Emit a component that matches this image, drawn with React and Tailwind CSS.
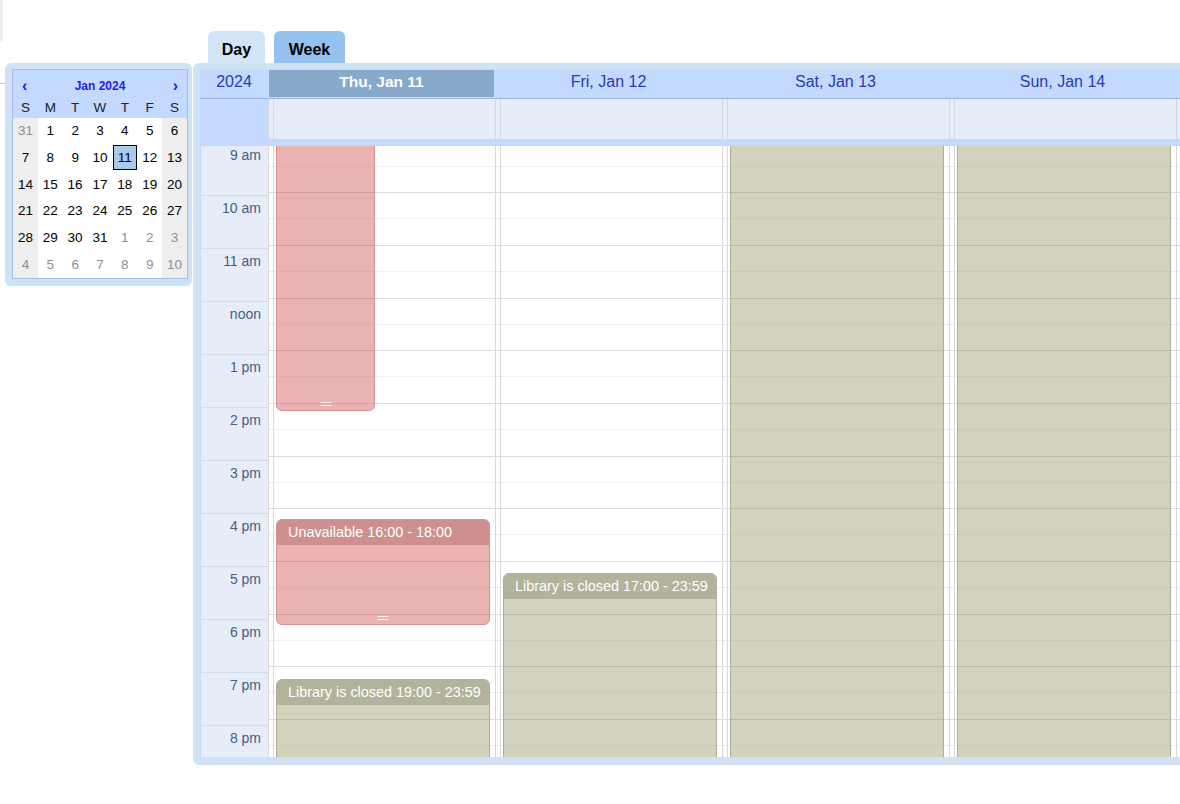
import React from 'react';

const FONT = "font-['Liberation_Sans',Arial,sans-serif]";

const weeks = [
  [31, 1, 2, 3, 4, 5, 6],
  [7, 8, 9, 10, 11, 12, 13],
  [14, 15, 16, 17, 18, 19, 20],
  [21, 22, 23, 24, 25, 26, 27],
  [28, 29, 30, 31, 1, 2, 3],
  [4, 5, 6, 7, 8, 9, 10],
];

// which cells belong to another month
const isOther = (w, d) => (w === 0 && d === 0) || (w === 4 && d >= 4) || w === 5;

const hourLabels = ['9 am', '10 am', '11 am', 'noon', '1 pm', '2 pm', '3 pm', '4 pm', '5 pm', '6 pm', '7 pm', '8 pm'];

const days = [
  {
    key: 'thu',
    label: 'Thu, Jan 11',
    today: true,
    events: [
      { kind: 'busy', pos: 'top-[-10px] h-[275px] w-[99px]', handle: true },
      { kind: 'busy', pos: 'top-[373px] h-[106px] w-[214px]', title: 'Unavailable 16:00 - 18:00', handle: true },
      { kind: 'closed', pos: 'top-[533px] h-[200px] w-[214px]', title: 'Library is closed 19:00 - 23:59' },
    ],
  },
  {
    key: 'fri',
    label: 'Fri, Jan 12',
    events: [{ kind: 'closed', pos: 'top-[427px] h-[300px] w-[214px]', title: 'Library is closed 17:00 - 23:59' }],
  },
  { key: 'sat', label: 'Sat, Jan 13', events: [{ kind: 'closed', pos: 'top-[-10px] h-[700px] w-[214px]' }] },
  { key: 'sun', label: 'Sun, Jan 14', events: [{ kind: 'closed', pos: 'top-[-10px] h-[700px] w-[214px]' }] },
  // next column only peeks in at the right edge
  { key: 'mon', label: '', events: [] },
];

const MiniCalendar = () => (
  <div className="ml-[5px] mt-[63px] w-[187px] flex-none rounded-[6px] bg-[#d0e3f5] pt-[6px] pl-[7px] pr-[4px] pb-[7px]">
    <div className="border border-[#a7bfe2] bg-white">
      <div className="bg-[#c3d9ff]">
        <div className="flex h-[28px] items-center justify-between px-[9px] pt-[3px]">
          <span className="text-[16px] font-bold leading-none text-[#1a1aee]">‹</span>
          <span className="text-[12px] font-bold text-[#1f1fe6]">Jan 2024</span>
          <span className="text-[16px] font-bold leading-none text-[#1a1aee]">›</span>
        </div>
        <div className="grid h-[20px] grid-cols-7 items-center text-center text-[13.5px] text-[#222]">
          {['S', 'M', 'T', 'W', 'T', 'F', 'S'].map((d, i) => (
            <span key={i}>{d}</span>
          ))}
        </div>
      </div>
      <div className="grid h-[160px] grid-cols-7 grid-rows-6 text-[13.5px]">
        {weeks.map((week, w) =>
          week.map((n, d) => {
            const weekend = d === 0 || d === 6;
            const today = w === 1 && d === 4;
            return (
              <div
                key={`${w}-${d}`}
                className={`flex items-center justify-center ${weekend ? 'bg-[#eeeeee]' : ''} ${
                  isOther(w, d) ? 'text-[#8f8f8f]' : 'text-black'
                }`}
              >
                {today ? (
                  <span className="flex h-[25px] w-[24px] items-center justify-center border border-black bg-[#a8c8ec]">
                    {n}
                  </span>
                ) : (
                  n
                )}
              </div>
            );
          })
        )}
      </div>
    </div>
  </div>
);

const Event = ({ ev }) => {
  const busy = ev.kind === 'busy';
  return (
    <div
      className={`absolute left-[7px] ${ev.pos} overflow-hidden rounded-[6px] border ${
        busy ? 'border-[#d39393] bg-[rgba(207,68,68,0.41)]' : 'border-[#aeae98] bg-[rgba(149,149,95,0.41)]'
      }`}
    >
      {ev.title && (
        <div
          className={`h-[25px] whitespace-nowrap pl-[11px] pr-[1px] text-[14.4px] leading-[25px] text-white ${
            busy ? 'bg-[#cf8f8f]' : 'bg-[#b3b39b]'
          }`}
        >
          {ev.title}
        </div>
      )}
      {ev.handle && (
        <div className="absolute bottom-[4px] left-1/2 h-[4px] w-[11px] -translate-x-1/2 border-y border-white/90" />
      )}
    </div>
  );
};

const DayColumn = ({ day }) => (
  <div className="relative h-full w-[227px] flex-none overflow-hidden border-l border-[#d8d8d8] bg-white">
    <div className="-mt-[6.5px]">
      {hourLabels.concat(['9 pm']).map((h) => (
        <div key={h} className="h-[52.7px] border-t border-[#dcdcdc]">
          <div className="h-[26px] border-b border-dotted border-[#e2e2e2]" />
        </div>
      ))}
    </div>
    <div className="absolute bottom-0 left-[4px] top-0 w-px bg-[#d8d8d8]" />
    {day.events.map((ev, i) => (
      <Event key={i} ev={ev} />
    ))}
  </div>
);

const WeekView = () => (
  <div className="ml-[1px] flex-none">
    <div className="flex gap-[9px] pl-[15px] pt-[31px]">
      <div className="flex h-[32px] w-[57px] items-center justify-center rounded-t-[6px] bg-[#d2e4f6] pt-[5px] text-[16px] font-bold text-black">
        Day
      </div>
      <div className="flex h-[32px] w-[71px] items-center justify-center rounded-t-[6px] bg-[#94c1ee] pt-[5px] text-[16px] font-bold text-black">
        Week
      </div>
    </div>
    <div className="w-[1100px] rounded-l-[6px] bg-[#d0e3f5] pb-[8px] pl-[7px] pt-[6px]">
      {/* day headers */}
      <div className="flex h-[30px] border-b border-[#9bb4d6] bg-[#c3d9ff] text-[16px] text-[#2a39b5]">
        <div className="flex w-[68px] flex-none items-center justify-center pb-[3px]">2024</div>
        {days.map((d) => (
          <div key={d.key} className="w-[227px] flex-none p-[1px]">
            {d.today ? (
              <div className="flex h-full items-center justify-center bg-[#87a9cc] pb-[3px] text-[15.5px] font-bold text-white">
                {d.label}
              </div>
            ) : (
              <div className="flex h-full items-center justify-center pb-[3px]">{d.label}</div>
            )}
          </div>
        ))}
      </div>
      {/* all-day row */}
      <div className="flex h-[40px]">
        <div className="w-[68px] flex-none bg-[#c3d9ff]" />
        {days.map((d) => (
          <div key={d.key} className="relative w-[227px] flex-none border-l border-[#d8d8d8] bg-[#e6edf8]">
            <div className="absolute bottom-0 left-[4px] top-0 w-px bg-[#d8d8d8]" />
          </div>
        ))}
      </div>
      <div className="h-[7px] bg-[#c3d9ff]" />
      {/* time grid */}
      <div className="flex h-[611px] overflow-hidden">
        <div className="w-[68px] flex-none overflow-hidden border-l border-[#c7dafb] bg-[#e6edf8]">
          <div className="-mt-[4px]">
            {hourLabels.map((h) => (
              <div
                key={h}
                className="h-[53px] border-t border-[#d3dbe6] pr-[7px] pt-[4px] text-right text-[14px] leading-[16px] text-[#455f7e]"
              >
                {h}
              </div>
            ))}
          </div>
        </div>
        {days.map((d) => (
          <DayColumn key={d.key} day={d} />
        ))}
      </div>
    </div>
  </div>
);

export default function App() {
  return (
    <div className={`relative flex h-[804px] w-[1180px] items-start overflow-hidden bg-white ${FONT}`}>
      <div className="absolute left-0 top-0 h-[42px] w-[3px] bg-[#eeeef4]" />
      <div className="absolute left-0 top-[83px] h-px w-[5px] bg-[#c8c8c8]" />
      <MiniCalendar />
      <WeekView />
    </div>
  );
}
